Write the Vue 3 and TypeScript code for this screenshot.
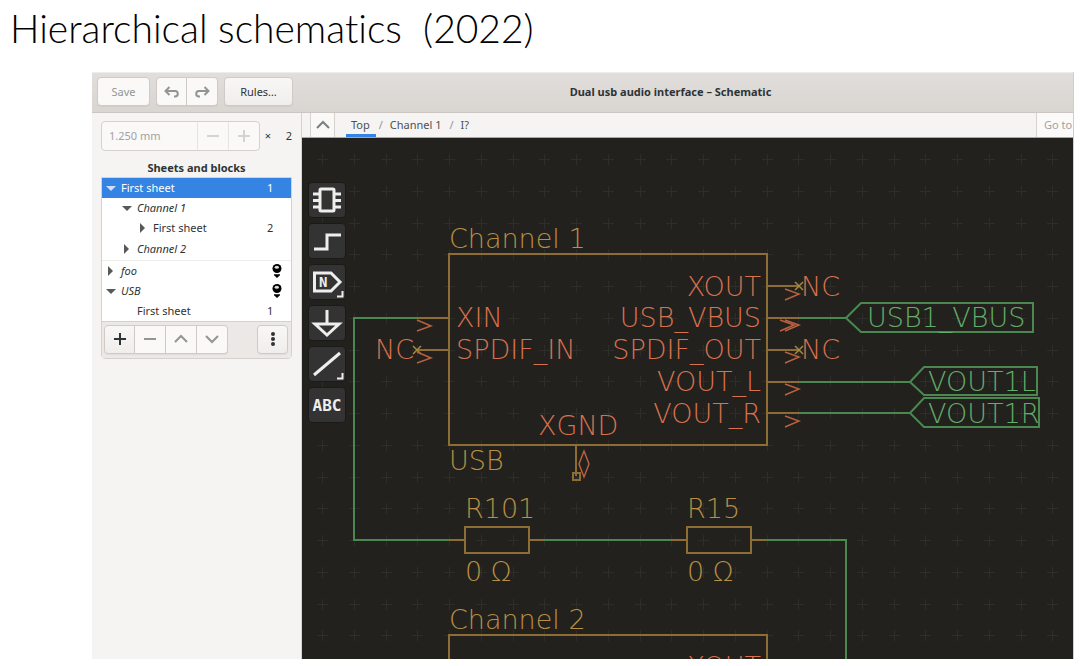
<script setup lang="ts">
import { ref } from 'vue'

interface TreeRow {
  label: string
  depth: number
  state: 'open' | 'closed' | 'leaf'
  italic?: boolean
  count?: string
  pin?: boolean
  selected?: boolean
  ruled?: boolean
}
interface Label {
  text: string
  x: number
  y: number
  tone: 'symbol' | 'pin' | 'net'
  end?: boolean
}

const rows: TreeRow[] = [
  { label: 'First sheet', depth: 0, state: 'open', count: '1', selected: true },
  { label: 'Channel 1', depth: 1, state: 'open', italic: true },
  { label: 'First sheet', depth: 2, state: 'closed', count: '2' },
  { label: 'Channel 2', depth: 1, state: 'closed', italic: true, ruled: true },
  { label: 'foo', depth: 0, state: 'closed', italic: true, pin: true },
  { label: 'USB', depth: 0, state: 'open', italic: true, pin: true },
  { label: 'First sheet', depth: 1, state: 'leaf', count: '1' },
]

const labels: Label[] = [
  { text: 'Channel 1', x: 147, y: 110, tone: 'symbol' },
  { text: 'USB', x: 147, y: 332, tone: 'symbol' },
  { text: 'R101', x: 163, y: 380, tone: 'symbol' },
  { text: '0 Ω', x: 163, y: 443, tone: 'symbol' },
  { text: 'R15', x: 385, y: 380, tone: 'symbol' },
  { text: '0 Ω', x: 385, y: 443, tone: 'symbol' },
  { text: 'Channel 2', x: 147, y: 491, tone: 'symbol' },
  { text: 'XIN', x: 154, y: 189, tone: 'pin' },
  { text: 'SPDIF_IN', x: 154, y: 221, tone: 'pin' },
  { text: 'NC', x: 73, y: 221, tone: 'pin' },
  { text: 'XOUT', x: 459, y: 158, tone: 'pin', end: true },
  { text: 'USB_VBUS', x: 459, y: 189, tone: 'pin', end: true },
  { text: 'SPDIF_OUT', x: 459, y: 221, tone: 'pin', end: true },
  { text: 'VOUT_L', x: 459, y: 253, tone: 'pin', end: true },
  { text: 'VOUT_R', x: 459, y: 285, tone: 'pin', end: true },
  { text: 'XGND', x: 236, y: 297, tone: 'pin' },
  { text: 'NC', x: 499, y: 158, tone: 'pin' },
  { text: 'NC', x: 499, y: 221, tone: 'pin' },
  { text: 'XOUT', x: 459, y: 538, tone: 'pin', end: true },
  { text: 'USB1_VBUS', x: 565, y: 189, tone: 'net' },
  { text: 'VOUT1L', x: 626, y: 253, tone: 'net' },
  { text: 'VOUT1R', x: 626, y: 285, tone: 'net' },
]

const pitch = 127 / 4
const cols = 80
const lines = 17
let grid = ''
for (let r = 0; r < lines; r++) {
  for (let c = 0; c < cols; c++) {
    const x = Math.round(20 + c * pitch)
    const y = Math.round(21 + r * pitch)
    grid += `M${x - 5} ${y}.5h11M${x}.5 ${y - 5}v11`
  }
}

const tools = ['Place symbol', 'Draw net line', 'Place net label', 'Place power symbol', 'Draw line', 'Place text']
const size = ref('1.250 mm')
</script>

<template>
  <main class="page">
    <h1>Hierarchical schematics&nbsp; (2022)</h1>
    <section class="window">
      <header class="titlebar">
        <button class="btn off save" type="button">Save</button>
        <div class="linked">
          <button class="btn off" type="button" aria-label="Undo">
            <svg width="16" height="16" viewBox="0 0 16 16"><path d="M5.5 3 1.5 7l4 4M2 7h9a2.8 2.8 0 0 1 0 5.6h-1" /></svg>
          </button>
          <button class="btn off" type="button" aria-label="Redo">
            <svg width="16" height="16" viewBox="0 0 16 16"><path d="M10.5 3 14.5 7l-4 4M14 7H5a2.8 2.8 0 0 0 0 5.6h1" /></svg>
          </button>
        </div>
        <button class="btn rules" type="button">Rules…</button>
        <h2>Dual usb audio interface – Schematic</h2>
      </header>
      <div class="body">
        <aside class="side">
          <div class="gridrow">
            <div class="spin">
              <input v-model="size" aria-label="Grid spacing" disabled />
              <button type="button" aria-label="Decrease" disabled><svg width="14" height="14"><path d="M1 7h12" /></svg></button>
              <button type="button" aria-label="Increase" disabled><svg width="14" height="14"><path d="M1 7h12M7 1v12" /></svg></button>
            </div>
            <span class="times">×</span>
            <span class="mult">2</span>
          </div>
          <h3>Sheets and blocks</h3>
          <div class="treebox">
            <table>
              <tbody>
                <tr v-for="(row, i) in rows" :key="i" :class="{ selected: row.selected, ruled: row.ruled }">
                  <td class="name" :class="['d' + row.depth, { italic: row.italic }]">
                    <div class="cell">
                      <button v-if="row.state !== 'leaf'" class="toggle" type="button" aria-label="Toggle row">
                        <svg width="10" height="10">
                          <path v-if="row.state === 'open'" d="M0 3h10L5 8z" />
                          <path v-else d="M2 0v10l5-5z" />
                        </svg>
                      </button>
                      <span v-else class="toggle"></span>
                      <span>{{ row.label }}</span>
                    </div>
                  </td>
                  <td class="count">
                    <template v-if="row.count">{{ row.count }}</template>
                    <svg v-if="row.pin" class="bulb" width="10" height="14" viewBox="0 0 10 14">
                      <circle cx="5" cy="4.5" r="4.5" />
                      <ellipse class="shine" cx="4.8" cy="3.2" rx="2.2" ry="1.5" />
                      <path d="M2 10.3h6v1L5 14 2 11.3z" />
                    </svg>
                  </td>
                </tr>
              </tbody>
            </table>
            <div class="actions">
              <div class="linked">
                <button class="btn" type="button" aria-label="Add"><svg width="16" height="16"><path d="M2 8h12M8 2v12" /></svg></button>
                <button class="btn off" type="button" aria-label="Remove"><svg width="16" height="16"><path d="M2 8h12" /></svg></button>
                <button class="btn off" type="button" aria-label="Move up"><svg width="16" height="16"><path d="m2 11 6-6 6 6" /></svg></button>
                <button class="btn off" type="button" aria-label="Move down"><svg width="16" height="16"><path d="m2 5 6 6 6-6" /></svg></button>
              </div>
              <button class="btn" type="button" aria-label="More">
                <svg width="16" height="16" class="dots"><circle cx="8" cy="3" r="2" /><circle cx="8" cy="8" r="2" /><circle cx="8" cy="13" r="2" /></svg>
              </button>
            </div>
          </div>
        </aside>
        <div class="main">
          <nav class="path">
            <button class="up" type="button" aria-label="Go up"><svg width="14" height="10"><path d="m1 8 6-6 6 6" /></svg></button>
            <a class="active" href="#top">Top</a>
            <i>/</i>
            <a href="#channel">Channel 1</a>
            <i>/</i>
            <a href="#instance">I?</a>
            <input class="goto" aria-label="Go to" placeholder="Go to" />
          </nav>
          <div class="canvas">
            <svg class="sheet" width="100%" height="521">
              <path class="grid" :d="grid" />
              <g class="wire symbol">
                <rect x="147" y="116" width="318" height="191" />
                <path d="M147 540V497H465V540" />
                <rect x="163" y="389" width="64" height="26" />
                <rect x="385" y="389" width="64" height="26" />
                <path d="M115 180h32M115 212h32M465 148h32M465 180h32M465 212h32M465 244h32M465 275h32" />
                <path d="M148 402h15M227 402h15M370 402h15M449 402h15M274 307v31" />
                <rect x="271" y="335" width="7" height="7" />
                <path class="cross" d="m111 208 8 8m0-8-8 8M493 144l8 8m0-8-8 8M493 208l8 8m0-8-8 8" />
              </g>
              <g class="wire net">
                <path d="M115 180H52V402H148M242 402H370M464 402H544V521M497 180h47M497 244h111M497 275h111" />
                <path d="m544 180 15-15H731v29H559zM608 244l14-15H735v28H622zM608 275l14-15H737v29H622z" />
              </g>
              <g class="wire pin">
                <path d="m115 182 14 6-14 5M115 214l14 6-14 5M483 151l14 5-14 6M478 182l14 5-14 6M483 182l14 5-14 6M483 214l14 5-14 6M483 246l14 5-14 6M483 278l14 5-14 6" />
                <path d="m282 313 5 13-5 13-5-13z" />
              </g>
              <text v-for="(l, i) in labels" :key="i" :x="l.x" :y="l.y" :class="[l.tone, { end: l.end }]">{{ l.text }}</text>
            </svg>
            <div class="tools">
              <button v-for="(t, i) in tools" :key="t" type="button" :aria-label="t">
                <svg width="36" height="34" viewBox="0 0 36 34">
                  <g v-if="i === 0">
                    <rect x="11" y="6" width="14" height="22" rx="1" />
                    <path d="M4 11h6M4 17.5h6M4 24h6M26 11h6M26 17.5h6M26 24h6" />
                  </g>
                  <path v-else-if="i === 1" d="M5 25H18V11H32" />
                  <g v-else-if="i === 2">
                    <path d="M5.5 8H22L31 17 22 26H5.500z" />
                    <text x="10" y="22">N</text>
                  </g>
                  <path v-else-if="i === 3" d="M18 4V18M6 18H30L18 29z" />
                  <path v-else-if="i === 4" d="M5 28 31 6" />
                  <text v-else class="abc" x="18" y="23">ABC</text>
                  <path v-if="i === 2 || i === 4" class="corner" d="M28 31.5H33.500V26" />
                </svg>
              </button>
            </div>
          </div>
        </div>
      </div>
    </section>
  </main>
</template>

<style>
body {
  margin: 0;
  background: #fff;
}
</style>

<style scoped>
* {
  box-sizing: border-box;
}
.page {
  padding: 0 6px 7px 10px;
  font: 11px/16px "Noto Sans", "Open Sans", sans-serif;
  color: #2e3436;
  overflow: hidden;
}
h1 {
  margin: 0;
  padding: 4px 0 20px;
  font: 300 39px/48px Lato, sans-serif;
  font-variant-ligatures: none;
  color: #000;
  white-space: nowrap;
}
button,
input {
  font: inherit;
  color: inherit;
  margin: 0;
  padding: 0;
  min-width: 0;
  border: 0;
  background: none;
}
button {
  display: flex;
  align-items: center;
  justify-content: center;
}
svg {
  display: block;
  fill: none;
  stroke: currentColor;
  stroke-width: 2;
}
.window {
  margin-left: 82px;
  border-right: 1px solid #d0cdca;
  background: #f5f4f2;
}
.titlebar {
  display: flex;
  align-items: center;
  gap: 6px;
  height: 41px;
  padding: 0 5px 2px;
  background: linear-gradient(#e1dedb, #d9d5d1);
  border-top: 1px solid #efedeb;
  border-bottom: 1px solid #cbc6c1;
}
.titlebar h2 {
  flex: 1;
  margin: 0;
  padding-right: 26px;
  font-size: 11px;
  line-height: 16px;
  text-align: center;
  white-space: nowrap;
}
.btn {
  width: 31px;
  height: 29px;
  border: 1px solid #d0cbc6;
  border-radius: 4px;
  background: linear-gradient(#f8f7f6, #efeeec);
  box-shadow: 0 1px 1px #0000000d;
}
.btn.off {
  background: #faf9f8;
  color: #929595;
}
.save {
  width: 53px;
}
.rules {
  width: 69px;
}
.linked {
  display: flex;
}
.linked .btn + .btn {
  border-left: 0;
  border-radius: 0;
}
.linked .btn:first-child {
  border-radius: 4px 0 0 4px;
}
.linked .btn:last-child {
  border-radius: 0 4px 4px 0;
}
.body {
  display: flex;
}
.side {
  flex: none;
  width: 210px;
  padding: 8px 9px 0;
  border-right: 1px solid #d5d1cd;
}
.gridrow {
  display: flex;
  align-items: center;
}
.spin {
  display: flex;
  width: 159px;
  height: 30px;
  border: 1px solid #d5d1cd;
  border-radius: 4px;
  background: #faf9f8;
  color: #a0a3a3;
}
.spin input {
  flex: 1;
  padding-left: 7px;
}
.spin button {
  width: 31px;
  border-left: 1px solid #e6e3e1;
  color: #d2d3d2;
}
.times {
  width: 16px;
  text-align: center;
}
.mult {
  flex: 1;
  text-align: right;
}
h3 {
  margin: 9px 0 1px;
  font-size: 11px;
  line-height: 16px;
  text-align: center;
}
.treebox {
  border: 1px solid #d5d1cd;
  border-radius: 0 0 4px 4px;
  background: #fff;
}
table {
  width: 100%;
  border-collapse: collapse;
}
td {
  height: 20px;
  padding: 0;
  line-height: 20px;
}
.cell {
  display: flex;
  align-items: center;
  gap: 5px;
}
.selected {
  background: #3584e4;
  color: #fff;
}
.ruled td {
  height: 22px;
  border-bottom: 1px solid #efeeed;
}
.italic {
  font-style: italic;
}
.d0 {
  padding-left: 4px;
}
.d1 {
  padding-left: 20px;
}
.d2 {
  padding-left: 36px;
}
.toggle {
  flex: none;
  width: 10px;
  height: 10px;
  color: #555958;
}
.toggle path {
  fill: currentColor;
  stroke: none;
}
.selected .toggle {
  color: #cfe1f8;
}
.count {
  width: 24px;
}
.bulb {
  margin-left: 5px;
  fill: #000;
  stroke: none;
}
.bulb .shine {
  fill: #ddd;
}
.actions {
  display: flex;
  justify-content: space-between;
  padding: 3px 3px 4px 2px;
  border-top: 1px solid #d5d1cd;
  background: #ebe8e6;
}
.dots {
  fill: currentColor;
  stroke: none;
}
.main {
  flex: 1;
  min-width: 0;
}
.path {
  display: flex;
  height: 25px;
  padding-left: 8px;
  align-items: stretch;
  border-bottom: 1px solid #a9a7a4;
  color: #4c5152;
  line-height: 24px;
}
.path a {
  color: inherit;
  text-decoration: none;
  white-space: nowrap;
}
.path .active {
  margin-left: 11px;
  padding: 0 6px 0 5px;
  border-bottom: 3px solid #3584e4;
}
.path i {
  width: 10px;
  text-align: center;
  font-style: normal;
  color: #929595;
}
.path .active + i {
  margin-right: 4px;
}
.path a + i:not(.active + i) {
  margin: 0 4px 0 5px;
}
.up {
  width: 25px;
  border: solid #d5d1cd;
  border-width: 0 1px;
  background: #faf9f8;
  color: #7b7f80;
}
.goto {
  width: 37px;
  margin-left: auto;
  padding-left: 7px;
  border-left: 1px solid #d5d1cd;
  background: #fbfaf9;
}
.goto::placeholder {
  color: #a0a3a3;
  opacity: 1;
}
.canvas {
  position: relative;
  background: #22211e;
  overflow: hidden;
}
.grid {
  stroke: #2d2d2a;
  stroke-width: 1;
}
.wire {
  stroke-width: 2;
}
.symbol {
  stroke: #8d6d34;
}
.net {
  stroke: #4b8850;
}
.wire.pin {
  stroke: #b8603f;
  stroke-width: 1.5;
}
.wire .cross {
  stroke: #a98a3c;
  stroke-width: 1.5;
}
.sheet text {
  font: 200 27px "DejaVu Sans Light", "DejaVu Sans", sans-serif;
  stroke: none;
}
.sheet text.symbol {
  fill: #b98f42;
}
.sheet text.pin {
  fill: #d8714e;
}
.sheet text.net {
  fill: #62ae68;
}
.end {
  text-anchor: end;
}
.tools {
  position: absolute;
  left: 6px;
  top: 44px;
  display: grid;
  gap: 5px;
}
.tools button {
  width: 38px;
  height: 36px;
  border: 1px solid #1a1a18;
  border-radius: 4px;
  background: #333333;
  color: #eeeeec;
}
.tools svg {
  stroke-width: 3;
}
.tools text {
  font: bold 14px "DejaVu Sans Mono", monospace;
  fill: currentColor;
  stroke: none;
}
.tools .abc {
  font-size: 16px;
  text-anchor: middle;
}
.tools .corner {
  stroke-width: 2;
}
</style>
